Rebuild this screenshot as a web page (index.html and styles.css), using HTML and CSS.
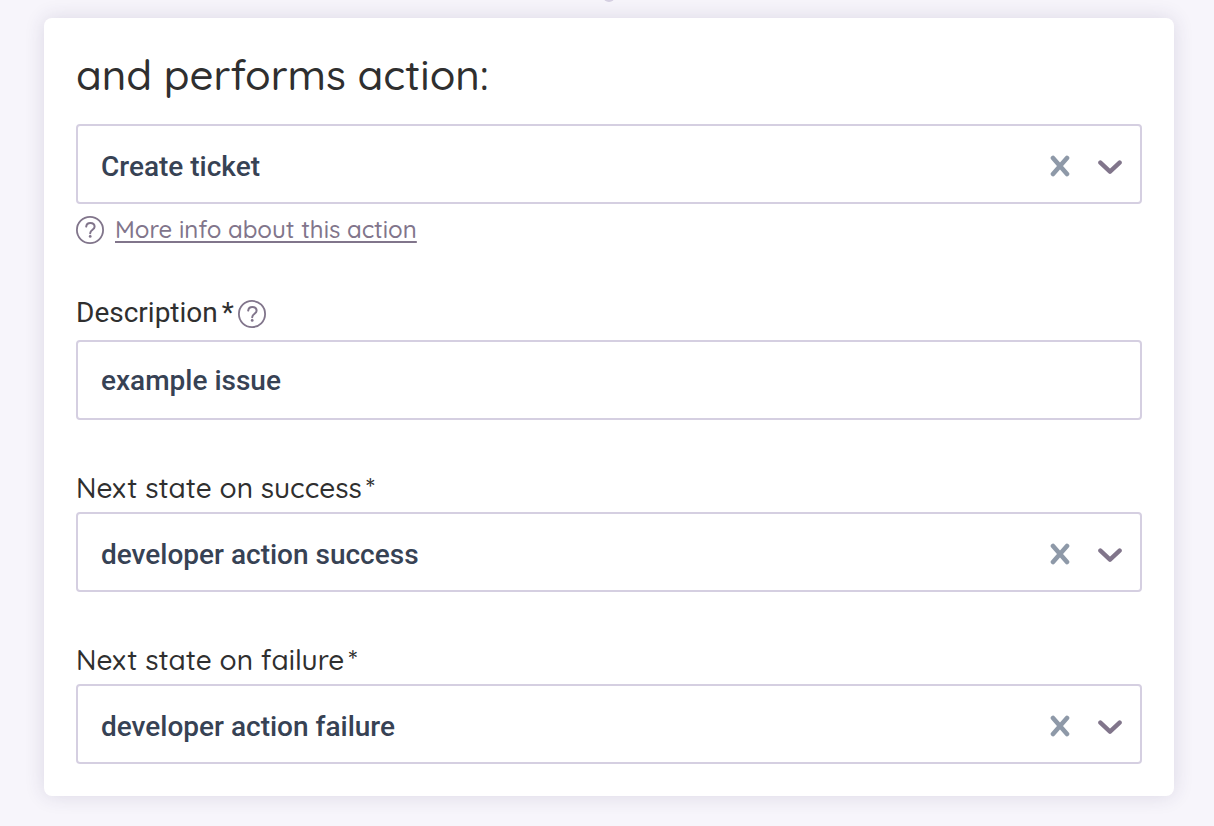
FILE: index.html
```html
<!DOCTYPE html>
<html lang="en">
<head>
<meta charset="utf-8">
<meta name="viewport" content="width=device-width, initial-scale=1">
<title>Action</title>
<link rel="stylesheet" href="styles.css">
</head>
<body class="page">
<span class="connector" aria-hidden="true"></span>
<svg class="sprite" aria-hidden="true">
  <symbol id="help" viewBox="0 0 28 28">
    <circle cx="14" cy="14" r="13.1" fill="none" stroke="currentColor" stroke-width="1.8"/>
    <path d="M10.2 10.6C10.5 8.4 12 7.1 14.3 7.1C16.8 7.1 18.6 8.6 18.6 10.8C18.6 13.8 14.4 13.8 14.2 17.2" fill="none" stroke="currentColor" stroke-width="2" stroke-linecap="round"/>
    <circle cx="14.2" cy="20.4" r="1.4" fill="currentColor"/>
  </symbol>
  <symbol id="clear" viewBox="0 0 20 22">
    <path d="M3 3L17 19M17 3L3 19" fill="none" stroke="currentColor" stroke-width="4.6" stroke-linecap="round"/>
  </symbol>
  <symbol id="chevron" viewBox="0 0 24 14">
    <path d="M2.4 2.6L12 11.6L21.6 2.6" fill="none" stroke="currentColor" stroke-width="4.4" stroke-linecap="round" stroke-linejoin="round"/>
  </symbol>
</svg>
<main class="card">
  <h1 class="title"><label for="action">and performs action:</label></h1>
  <div class="control">
    <select class="value" id="action"><option>Create ticket</option></select>
    <button class="clear" type="button" aria-label="Clear action"><svg class="clear-icon"><use href="#clear"/></svg></button>
    <svg class="chevron"><use href="#chevron"/></svg>
  </div>
  <p class="hint">
    <svg class="help-icon"><use href="#help"/></svg>
    <a class="more" href="#">More info about this action</a>
  </p>
  <div class="field description">
    <div class="label-row">
      <label class="label plain" for="description">Description<span class="star">*</span></label>
      <button class="help" type="button" aria-label="Help on description"><svg class="help-icon"><use href="#help"/></svg></button>
    </div>
    <div class="control">
      <input class="value" id="description" type="text" value="example issue">
    </div>
  </div>
  <div class="field">
    <label class="label" for="success">Next state on success<span class="star">*</span></label>
    <div class="control">
      <select class="value" id="success"><option>developer action success</option></select>
      <button class="clear" type="button" aria-label="Clear success state"><svg class="clear-icon"><use href="#clear"/></svg></button>
      <svg class="chevron"><use href="#chevron"/></svg>
    </div>
  </div>
  <div class="field">
    <label class="label" for="failure">Next state on failure<span class="star">*</span></label>
    <div class="control">
      <select class="value" id="failure"><option>developer action failure</option></select>
      <button class="clear" type="button" aria-label="Clear failure state"><svg class="clear-icon"><use href="#clear"/></svg></button>
      <svg class="chevron"><use href="#chevron"/></svg>
    </div>
  </div>
</main>
</body>
</html>
```
FILE: styles.css
```css
* { box-sizing: border-box; }

.page {
  margin: 0;
  padding: 18px 40px 30px 44px;
  background: #f7f5fb;
  color: #2f2f2f;
  font-family: Quicksand, "Noto Sans", sans-serif;
  font-weight: 500;
}

.sprite { display: none; }

.connector {
  position: absolute;
  top: -10px;
  left: calc(50% - 4px);
  width: 12px;
  height: 12px;
  border-radius: 50%;
  background: #d5cfe1;
}

.card {
  padding: 32px;
  border-radius: 8px;
  background: #fff;
  box-shadow: 0 0 20px rgba(50, 45, 90, 0.14);
}

.title {
  margin: 0 0 24px;
  font-size: 42px;
  line-height: 50px;
  font-weight: 500;
}

.control {
  display: flex;
  align-items: center;
  height: 80px;
  padding-right: 18px;
  border: 2px solid #d5cfe1;
  border-radius: 4px;
  background: #fff;
}

.value {
  flex: 1;
  min-width: 0;
  height: 100%;
  margin: 0;
  padding: 4px 24px 0 23px;
  border: 0;
  outline: 0;
  appearance: none;
  background: transparent;
  color: #374254;
  font: 500 28px Roboto, sans-serif;
}

input.value { padding-top: 0; }

.clear, .help {
  display: flex;
  padding: 0;
  border: 0;
  background: none;
}

.clear {
  margin: 4px 28px 0 0;
  color: #8e99a8;
}

.clear-icon { width: 20px; height: 22px; }

.chevron {
  width: 24px;
  height: 14px;
  margin-top: 6px;
  color: #81758b;
}

.hint {
  display: flex;
  align-items: center;
  gap: 11px;
  margin: 8px 0 0;
  color: #81758b;
}

.help { color: #81758b; }

.help-icon { width: 28px; height: 28px; }

.more {
  padding-bottom: 2px;
  color: inherit;
  font-size: 24px;
  line-height: 34px;
  text-underline-offset: 3px;
  text-decoration-thickness: 2px;
}

.field { margin-top: 52px; }

.description { margin-top: 49px; }

.label-row {
  display: flex;
  align-items: center;
  gap: 4px;
  margin-bottom: 9px;
}

.label {
  display: block;
  padding-bottom: 8px;
  font-size: 28px;
  line-height: 32px;
}

.plain {
  padding-bottom: 2px;
  font-family: Roboto, sans-serif;
  font-weight: 400;
}

.star { margin-left: 4px; }
```
